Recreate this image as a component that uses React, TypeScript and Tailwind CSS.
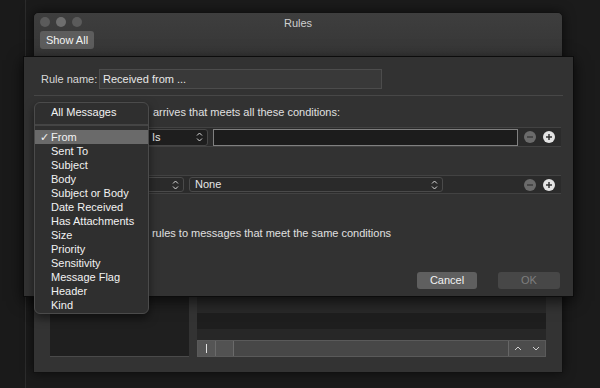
import React from 'react';

const font = { fontFamily: '"Liberation Sans", Arial, sans-serif' };

const Chevrons: React.FC = () => (
  <svg width="7" height="10" viewBox="0 0 7 10" className="shrink-0">
    <path d="M1 3.5 L3.5 1 L6 3.5 M1 6.5 L3.5 9 L6 6.5" fill="none" stroke="#d8d8d8" strokeWidth="1" />
  </svg>
);

const MinusPlus: React.FC = () => (
  <div className="flex items-center gap-[7px] ml-auto mr-[6px]">
    <svg width="12" height="12" viewBox="0 0 12 12">
      <circle cx="6" cy="6" r="6" fill="#6b6b6b" />
      <rect x="3" y="5.3" width="6" height="1.4" fill="#3a3a3a" />
    </svg>
    <svg width="12" height="12" viewBox="0 0 12 12">
      <circle cx="6" cy="6" r="6" fill="#e4e4e4" />
      <rect x="3" y="5.3" width="6" height="1.4" fill="#2a2a2a" />
      <rect x="5.3" y="3" width="1.4" height="6" fill="#2a2a2a" />
    </svg>
  </div>
);

const menuItems = [
  'From', 'Sent To', 'Subject', 'Body', 'Subject or Body', 'Date Received',
  'Has Attachments', 'Size', 'Priority', 'Sensitivity', 'Message Flag', 'Header', 'Kind',
];

const App: React.FC = () => {
  return (
    <div className="relative w-[600px] h-[388px] overflow-hidden bg-[#1b1b1b] text-[11px] text-[#e6e6e6]" style={font}>
      <div className="h-full w-[26px] border-r border-[#2c2c2c] bg-[#1a1a1a]" />

      {/* Rules window behind */}
      <div className="absolute left-[33px] top-[12px] w-[530px] h-[361px] flex flex-col rounded-t-[5px] border border-[#111] bg-[#333] shadow-[0_0_12px_rgba(0,0,0,0.6)]">
        <div className="relative h-[44px] bg-gradient-to-b from-[#3e3e3e] to-[#363636] rounded-t-[5px]">
          <div className="flex items-center gap-[6px] pl-[6px] pt-[4px]">
            <span className="w-[10px] h-[10px] rounded-full bg-[#5b5b5b]" />
            <span className="w-[10px] h-[10px] rounded-full bg-[#6e6e6e]" />
            <span className="w-[10px] h-[10px] rounded-full bg-[#5b5b5b]" />
          </div>
          <div className="absolute left-0 right-0 top-[2px] text-center text-[11px] text-[#cfcfcf]">Rules</div>
          <div className="ml-[6px] mt-[4px] w-[54px] h-[18px] rounded-[3px] bg-[#5d5d5d] flex items-center justify-center text-[11px] text-[#f4f4f4]">
            Show All
          </div>
        </div>
        <div className="flex-1 flex items-end gap-[8px] px-[16px] pb-[15px]">
          <div className="w-[139px] h-[200px] bg-[#1f1f1f] border-b border-[#4a4a4a]" />
          <div className="flex-1 flex flex-col">
            <div className="h-[16px] bg-[#292929]" />
            <div className="h-[16px] bg-[#1e1e1e]" />
            <div className="h-[11px] bg-[#272727]" />
            <div className="h-[17px] flex border border-[#5a5a5a] bg-[#474747]">
              <div className="w-[18px] border-r border-[#6a6a6a] bg-[#555] flex items-center justify-center">
                <span className="w-[1px] h-[9px] bg-[#e0e0e0]" />
              </div>
              <div className="w-[18px] border-r border-[#6a6a6a] bg-[#525252]" />
              <div className="flex-1" />
              <div className="w-[37px] border-l border-[#666] bg-[#4c4c4c] flex items-center justify-around">
                <svg width="8" height="5" viewBox="0 0 8 5"><path d="M1 4 L4 1 L7 4" fill="none" stroke="#d0d0d0" strokeWidth="1" /></svg>
                <svg width="8" height="5" viewBox="0 0 8 5"><path d="M1 1 L4 4 L7 1" fill="none" stroke="#d0d0d0" strokeWidth="1" /></svg>
              </div>
            </div>
          </div>
        </div>
      </div>

      {/* Sheet */}
      <div className="absolute left-[23px] top-[56px] w-[551px] h-[241px] flex flex-col bg-[#323232] border border-[#0c0c0c] shadow-[0_4px_14px_rgba(0,0,0,0.7)]">
        <div className="flex items-center pt-[12px] pl-[17px]">
          <span className="text-[#d8d8d8] w-[58px]">Rule name:</span>
          <div className="w-[283px] h-[20px] bg-[#393939] border border-[#4c4c4c] flex items-center pl-[3px] text-[#e8e8e8]">Received from ...</div>
        </div>
        <div className="mx-[10px] mt-[6px] border-t border-[#474747]" />
        <div className="pl-[17px] mt-[9px] leading-[14px] text-[#e0e0e0]">
          <span className="invisible">When a new message </span>arrives that meets all these conditions:
        </div>
        <div className="ml-[10px] mr-[12px] mt-[8px] h-[20px] flex items-center bg-[#2b2b2b] border-y border-[#424242]">
          <div className="ml-[7px] w-[98px] h-[16px] rounded-[3px] bg-[#1e1e1e] border border-[#474747]" />
          <div className="ml-[6px] w-[63px] h-[17px] rounded-[3px] bg-[#1e1e1e] border border-[#474747] flex items-center justify-between pl-[6px] pr-[4px]">
            <span>Is</span>
            <Chevrons />
          </div>
          <div className="ml-[5px] w-[305px] h-[17px] bg-[#1c1c1c] border border-[#808080]" />
          <MinusPlus />
        </div>
        <div className="h-[28px]" />
        <div className="ml-[10px] mr-[12px] h-[19px] flex items-center bg-[#2b2b2b] border-y border-[#424242]">
          <div className="ml-[7px] w-[143px] h-[15px] rounded-[3px] bg-[#2a2a2a] border border-[#4a4a4a] flex items-center justify-end pr-[4px]">
            <Chevrons />
          </div>
          <div className="ml-[5px] w-[254px] h-[15px] rounded-[3px] bg-[#2a2a2a] border border-[#4a4a4a] flex items-center justify-between pl-[5px] pr-[4px]">
            <span>None</span>
            <Chevrons />
          </div>
          <MinusPlus />
        </div>
        <div className="flex items-center pl-[17px] mt-[32px] leading-[14px] text-[#e0e0e0]">
          <span className="w-[12px] h-[12px] rounded-[2px] bg-[#555] mr-[6px]" />
          <span>
            <span className="invisible">Do not apply other </span>rules to messages that meet the same conditions
          </span>
        </div>
        <div className="flex justify-end gap-[21px] mt-[32px] pr-[13px]">
          <div className="w-[60px] h-[17px] rounded-[3px] bg-[#5f5f5f] flex items-center justify-center text-[11px] text-[#f2f2f2]">Cancel</div>
          <div className="w-[62px] h-[17px] rounded-[3px] bg-[#474747] flex items-center justify-center text-[11px] text-[#7e7e7e]">OK</div>
        </div>
      </div>

      {/* Popup menu */}
      <div className="absolute left-[34px] top-[102px] w-[115px] h-[212px] rounded-[6px] bg-[#2f2f2f] border border-[#4b4b4b] shadow-[0_4px_10px_rgba(0,0,0,0.5)] py-[2px] text-[11px] text-[#f2f2f2]">
        <div className="h-[15px] pl-[16px] leading-[15px]">All Messages</div>
        <div className="mt-[4px] mb-[4px] border-t-2 border-[#454545]" />
        {menuItems.map((item, i) => (
          <div
            key={item}
            className={i === 0 ? 'h-[14px] leading-[14px] pl-[16px] relative bg-[#6a6a6a]' : 'h-[14px] leading-[14px] pl-[16px]'}
          >
            {i === 0 && <span className="absolute left-[5px] top-0">✓</span>}
            {item}
          </div>
        ))}
      </div>
    </div>
  );
};

export default App;
